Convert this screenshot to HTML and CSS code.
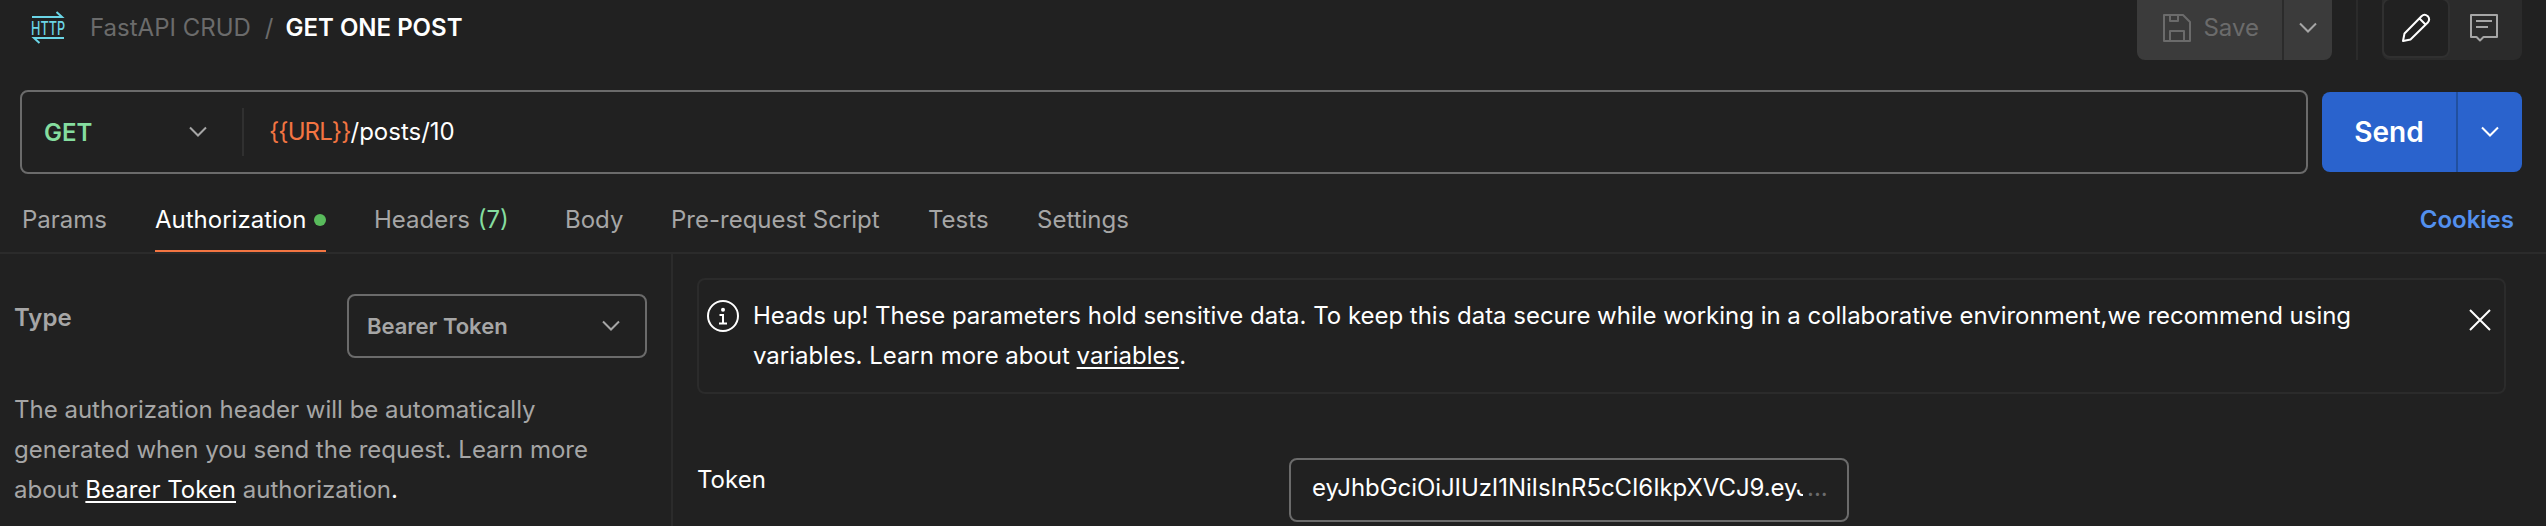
FILE: index.html
```html
<!DOCTYPE html>
<html lang="en">
<head>
<meta charset="utf-8">
<title>GET ONE POST</title>
<link rel="stylesheet" href="styles.css">
</head>
<body>
<header class="topbar">
  <svg class="http-icon" width="32" height="34" viewBox="0 0 32 34">
    <path d="M0 6H30L24.5 1M32 27H2L7.500 32" fill="none" stroke="#6bd5e6" stroke-width="2"/>
    <text x="-1" y="23.500" textLength="34" lengthAdjust="spacingAndGlyphs">HTTP</text>
  </svg>
  <nav class="crumbs"><span class="crumb">FastAPI CRUD</span><span class="slash">/</span><span class="current">GET ONE POST</span></nav>
  <div class="save-group">
    <button class="save"><svg width="28" height="28" viewBox="0 0 28 28" fill="none" stroke="#6b6b6b" stroke-width="2"><path d="M1 1H20L27 8V27H1ZM7 1V7H15V1M7 27V17H21V27" stroke-linejoin="round"/></svg><span class="save-label">Save</span></button>
    <button class="save-more"><svg class="chev" width="18" height="12" viewBox="0 0 18 12"><path d="M1 1.500L9 9.500L17 1.500"/></svg></button>
  </div>
  <span class="sep"></span>
  <div class="toggle">
    <button class="tool active"><svg width="30" height="30" viewBox="0 0 30 30" fill="none" stroke="#fff" stroke-width="2" stroke-linejoin="round"><path d="M2 28L3.500 20.500L20.500 3.200Q23.500 0.400 26.800 3.200Q29.500 6.500 26.800 9.500L9.500 26.500ZM18.500 5.500L24.500 11.500"/></svg></button>
    <button class="tool"><svg width="28" height="28" viewBox="0 0 28 28" fill="none" stroke="#a6a6a6" stroke-width="2" stroke-linejoin="round"><path d="M1 1H27V23H13.500L10 26.500L6.500 23H1ZM6 7H22M6 13H18"/></svg></button>
  </div>
</header>
<section class="request">
  <div class="urlbox">
    <div class="method"><span class="verb">GET</span><svg class="chev" width="18" height="12" viewBox="0 0 18 12"><path d="M1 1.500L9 9.500L17 1.500"/></svg></div>
    <div class="url"><span class="var">{{URL}}</span>/posts/10</div>
  </div>
  <div class="send-group">
    <button class="send">Send</button>
    <button class="send-more"><svg class="chev light" width="18" height="12" viewBox="0 0 18 12"><path d="M1 1.500L9 9.500L17 1.500"/></svg></button>
  </div>
</section>
<nav class="tabs">
  <a class="tab t-params">Params</a>
  <a class="tab t-auth selected">Authorization<i class="dot"></i></a>
  <a class="tab t-headers">Headers <span class="count">(7)</span></a>
  <a class="tab t-body">Body</a>
  <a class="tab t-pre">Pre-request Script</a>
  <a class="tab t-tests">Tests</a>
  <a class="tab t-settings">Settings</a>
  <a class="cookies">Cookies</a>
</nav>
<main class="content">
  <aside class="side">
    <div class="type-row">
      <span class="type">Type</span>
      <div class="select"><span>Bearer Token</span><svg class="chev" width="18" height="12" viewBox="0 0 18 12"><path d="M1 1.500L9 9.500L17 1.500"/></svg></div>
    </div>
    <p class="help">The authorization header will be automatically<br>generated when you send the request. Learn more<br>about <a class="link">Bearer Token</a> authorization<span class="stop">.</span></p>
  </aside>
  <section class="main">
    <div class="alert">
      <svg class="info" width="32" height="32" viewBox="0 0 32 32" fill="none" stroke="#fff" stroke-width="2"><circle cx="16" cy="16" r="15"/><circle cx="16" cy="9.800" r="2" fill="#fff" stroke="none"/><path d="M12.500 15H16V23M12 23.500H20"/></svg>
      <p class="alert-text">Heads up! These parameters hold sensitive data. To keep this data secure while working in a collaborative environment,we recommend using<br>variables. Learn more about <a class="link">variables</a>.</p>
      <svg class="close" width="22" height="22" viewBox="0 0 22 22"><path d="M1 1L21 21M21 1L1 21" stroke="#fff" stroke-width="2"/></svg>
    </div>
    <div class="token-row">
      <span class="token-label">Token</span>
      <div class="token-input"><span class="token-value">eyJhbGciOiJIUzI1NiIsInR5cCI6IkpXVCJ9.eyJ</span><span class="more">...</span></div>
    </div>
  </section>
</main>
</body>
</html>
```
FILE: styles.css
```css
* { box-sizing: border-box; }
body {
  margin: 0;
  width: 2546px;
  height: 526px;
  overflow: hidden;
  background: #212121;
  color: #fff;
  font: 24px/40px Inter, sans-serif;
}
button { border: 0; padding: 0; margin: 0; font: inherit; color: inherit; background: none; display: flex; align-items: center; justify-content: center; }
p { margin: 0; }
svg { display: block; flex: none; overflow: visible; }
.chev path { fill: none; stroke: #a6a6a6; stroke-width: 2; }
.chev.light path { stroke: #fff; }

.topbar { display: flex; height: 90px; padding: 0 24px 0 32px; align-items: flex-start; }
.http-icon { margin-top: 11px; }
.http-icon text { font: 500 18px Inter, sans-serif; fill: #6bd5e6; }
.crumbs { margin: 8px auto 0 26px; display: flex; white-space: nowrap; }
.crumb, .slash { color: #6b6b6b; }
.slash { margin: 0 12px 0 14px; }
.current { font-weight: 600; }
.save-group { display: flex; width: 195px; height: 60px; border-radius: 0 0 8px 8px; overflow: hidden; background: #3b3b3b; }
.save { width: 145px; color: #6b6b6b; padding: 0 23px 4px 26px; justify-content: space-between; }
.save-more { width: 50px; border-left: 2px solid #2b2b2b; padding-bottom: 4px; }
.sep { width: 2px; height: 60px; margin: 0 24px; background: #2b2b2b; }
.toggle { display: flex; width: 140px; height: 60px; background: #2b2b2b; border-radius: 0 0 8px 8px; }
.tool { width: 72px; height: 60px; padding: 0 4px 4px 0; }
.tool.active { width: 68px; height: 60px; margin-top: -2px; background: #212121; border: 2px solid #303030; border-radius: 8px; }
.tool.active { padding: 0; }

.request { display: flex; height: 84px; padding: 0 24px 0 20px; justify-content: space-between; align-items: center; }
.urlbox { width: 2288px; height: 84px; border: 2px solid #6b6b6b; border-radius: 8px; display: flex; align-items: center; }
.method { width: 222px; height: 48px; padding: 0 35px 0 22px; border-right: 2px solid #303030; display: flex; align-items: center; justify-content: space-between; color: #85dd9f; font-weight: 600; }
.verb { padding-top: 2px; }
.url { padding: 0 0 0 25px; }
.var { color: #f37542; letter-spacing: -.9px; }
.send-group { display: flex; width: 200px; height: 80px; background: #2a63cd; border-radius: 8px; overflow: hidden; }
.send { width: 134px; font-size: 28px; font-weight: 600; }
.send-more { width: 66px; border-left: 2px solid #21509f; }

.tabs { display: flex; height: 80px; padding: 26px 32px 0 22px; border-bottom: 2px solid #2b2b2b; color: #a6a6a6; white-space: nowrap; }
.tab { height: 52px; flex: none; }
.t-params { width: 133px; }
.t-auth { width: 171px; margin-right: 48px; display: flex; align-items: flex-start; justify-content: space-between; }
.t-headers { width: 191px; }
.t-body { width: 106px; }
.t-pre { width: 257px; }
.t-tests { width: 109px; }
.selected { color: #fff; border-bottom: 2px solid #f37542; }
.dot { width: 12px; height: 12px; border-radius: 6px; background: #59bb5c; margin-top: 14px; }
.count { color: #85dd9f; margin-left: 1px; }
.cookies { margin-left: auto; color: #5390ee; font-weight: 600; }

.content { display: flex; height: 272px; }
.side { width: 673px; flex: none; border-right: 2px solid #2b2b2b; padding: 40px 24px 0 14px; color: #a6a6a6; }
.type-row { display: flex; justify-content: space-between; }
.type { font-weight: 600; padding-top: 4px; }
.select { width: 300px; height: 64px; padding: 0 25px 0 18px; border: 2px solid #6b6b6b; border-radius: 8px; display: flex; align-items: center; justify-content: space-between; font-size: 22px; font-weight: 600; }
.help { margin-top: 32px; white-space: nowrap; }
.link { color: #fff; text-decoration: underline; text-decoration-thickness: 2px; text-underline-offset: 3px; text-decoration-skip-ink: none; }
.stop { color: #fff; }
.main { flex: 1; padding: 24px 40px 0 24px; }
.alert { display: flex; height: 116px; padding: 16px 13px 0 8px; border: 2px solid #2b2b2b; border-radius: 8px; white-space: nowrap; }
.info { margin-top: 4px; }
.alert-text { margin-left: 14px; letter-spacing: -.02px; }
.close { margin: 13px 0 0 auto; }
.token-row { display: flex; margin-top: 64px; }
.token-label { width: 592px; padding-top: 2px; }
.token-input { width: 560px; height: 64px; padding: 8px 21px; border: 2px solid #6b6b6b; border-radius: 8px; display: flex; }
.token-value { width: 491px; flex: none; overflow: hidden; letter-spacing: -.08px; }
.more { color: #6b6b6b; margin-left: 4px; }
```
